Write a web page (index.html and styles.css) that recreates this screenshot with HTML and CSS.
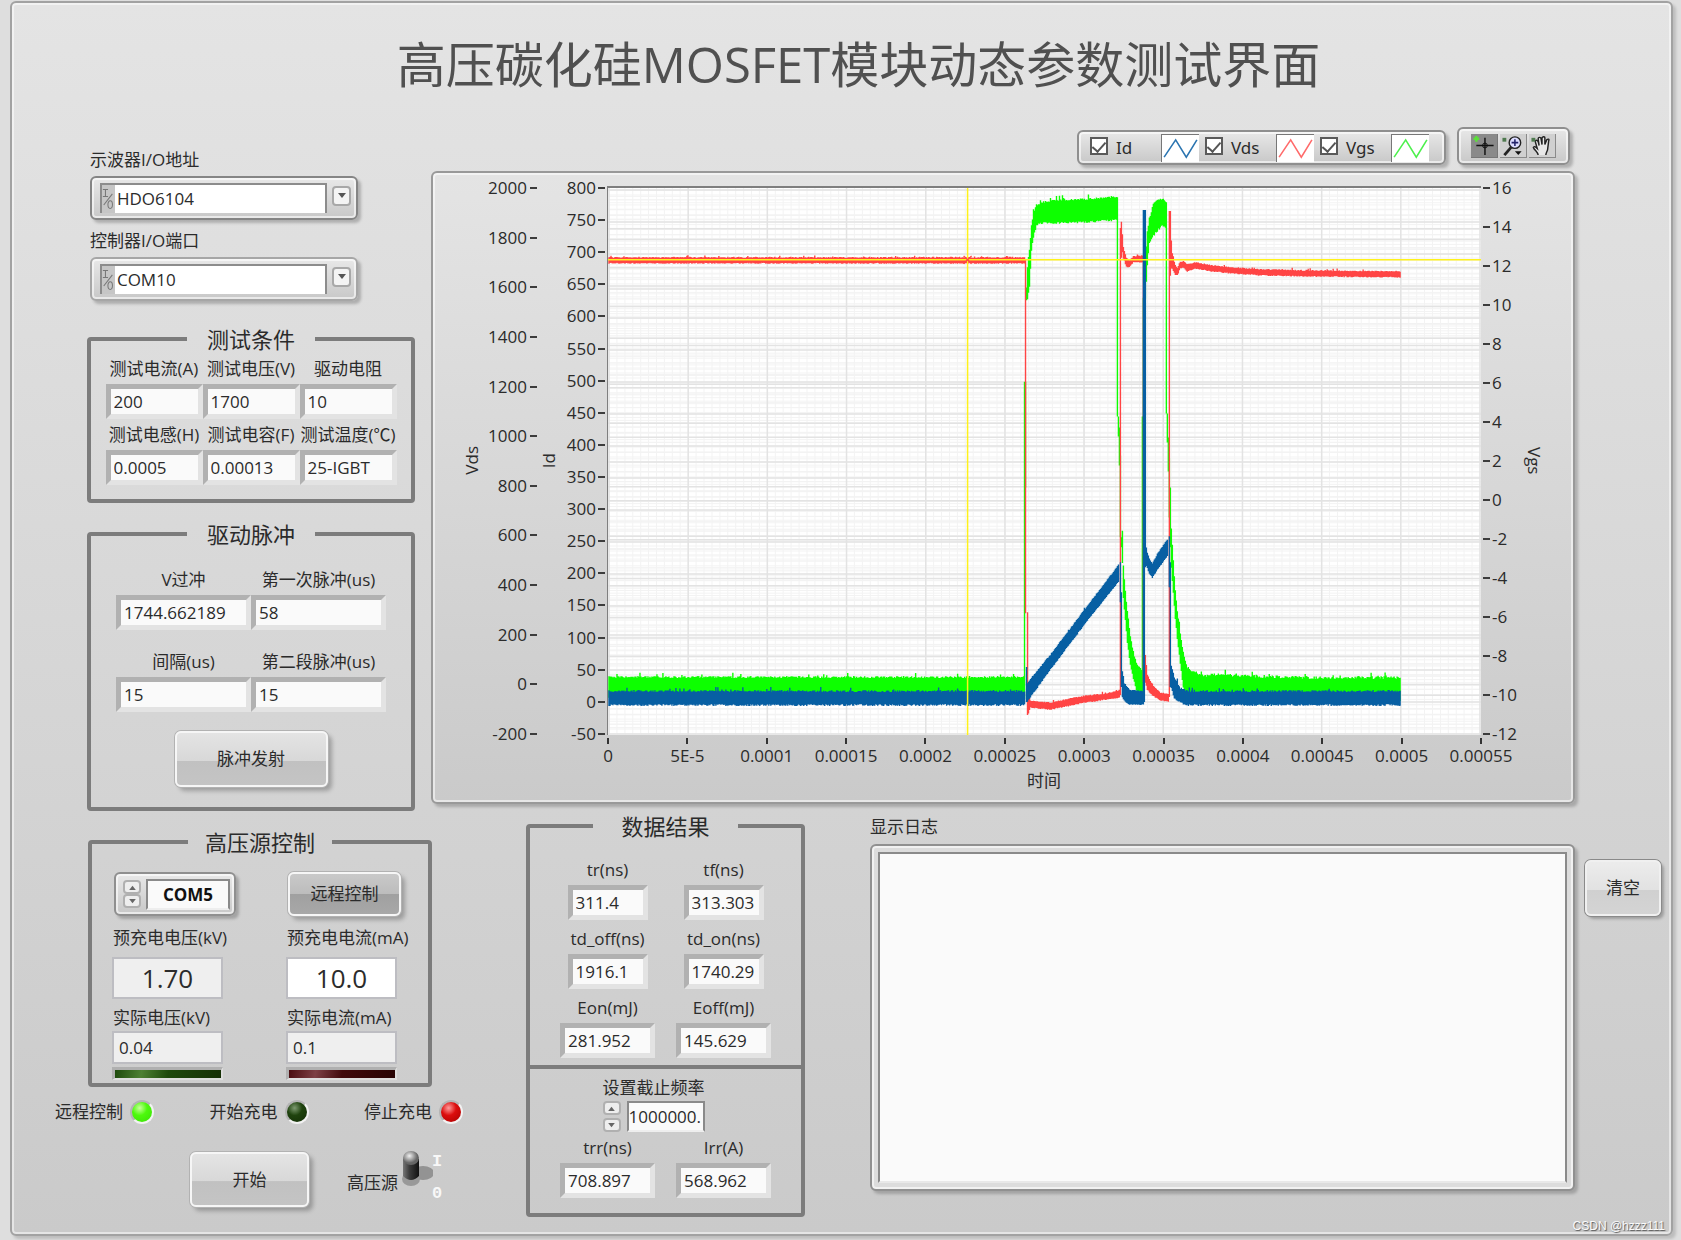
FILE: index.html
```html
<!DOCTYPE html>
<html lang="zh-CN">
<head>
<meta charset="utf-8">
<title>高压碳化硅MOSFET模块动态参数测试界面</title>
<link rel="stylesheet" href="styles.css">
</head>
<body>
<main class="panel">
  <h1 class="title">高压碳化硅MOSFET模块动态参数测试界面</h1>

  <div class="upper">
    <div class="setup">
      <label class="label" for="scope">示波器I/O地址</label>
      <div class="combo combo-focus">
        <svg class="io" viewBox="0 0 15 30" aria-hidden="true"><path d="M1 4h6M1 12h6M4 4v8M2 22L12 9M9.500 17c-3.500 0-3.500 9 0 9s3.500-9 0-9" /></svg>
        <select class="combo-select" id="scope"><option>HDO6104</option></select>
        <span class="drop"><svg viewBox="0 0 10 6" width="10" height="6" aria-hidden="true"><path d="M1 0h8L5 5z"/></svg></span>
      </div>
      <label class="label label-second" for="port">控制器I/O端口</label>
      <div class="combo">
        <svg class="io" viewBox="0 0 15 30" aria-hidden="true"><path d="M1 4h6M1 12h6M4 4v8M2 22L12 9M9.500 17c-3.500 0-3.500 9 0 9s3.500-9 0-9" /></svg>
        <select class="combo-select" id="port"><option>COM10</option></select>
        <span class="drop"><svg viewBox="0 0 10 6" width="10" height="6" aria-hidden="true"><path d="M1 0h8L5 5z"/></svg></span>
      </div>

      <fieldset class="group conditions">
        <legend>测试条件</legend>
        <div class="condition-grid">
          <div class="field"><label for="c1">测试电流(A)</label><input id="c1" value="200"></div>
          <div class="field"><label for="c2">测试电压(V)</label><input id="c2" value="1700"></div>
          <div class="field"><label for="c3">驱动电阻</label><input id="c3" value="10"></div>
          <div class="field"><label for="c4">测试电感(H)</label><input id="c4" value="0.0005"></div>
          <div class="field"><label for="c5">测试电容(F)</label><input id="c5" value="0.00013"></div>
          <div class="field"><label for="c6">测试温度(℃)</label><input id="c6" value="25-IGBT"></div>
        </div>
      </fieldset>

      <fieldset class="group pulses">
        <legend>驱动脉冲</legend>
        <div class="pulse-grid">
          <div class="field"><label for="p1">V过冲</label><input id="p1" value="1744.662189"></div>
          <div class="field"><label for="p2">第一次脉冲(us)</label><input id="p2" value="58"></div>
          <div class="field"><label for="p3">间隔(us)</label><input id="p3" value="15"></div>
          <div class="field"><label for="p4">第二段脉冲(us)</label><input id="p4" value="15"></div>
        </div>
        <button class="btn btn-pulse" type="button">脉冲发射</button>
      </fieldset>
    </div>

    <section class="scope">
      <div class="bars">
        <div class="bar legend-bar">
          <label class="series"><input type="checkbox" checked><span>Id</span><svg viewBox="0 0 38 28" aria-hidden="true"><path class="id" d="M2 23L14 5L25 23L36 5"/></svg></label>
          <label class="series"><input type="checkbox" checked><span>Vds</span><svg viewBox="0 0 38 28" aria-hidden="true"><path class="vds" d="M2 23L14 5L25 23L36 5"/></svg></label>
          <label class="series"><input type="checkbox" checked><span>Vgs</span><svg viewBox="0 0 38 28" aria-hidden="true"><path class="vgs" d="M2 23L14 5L25 23L36 5"/></svg></label>
        </div>
        <div class="bar tool-bar">
          <button class="tool tool-on" type="button" aria-label="光标"><svg viewBox="0 0 26 24"><path d="M14 4v18M5 12h18" stroke="#111" stroke-width="1.500"/><circle cx="14" cy="12" r="2.500" fill="none" stroke="#111"/><path d="M5 2v6M2 5h6" stroke="#5be03a" stroke-width="2.500"/></svg></button>
          <button class="tool" type="button" aria-label="缩放"><svg viewBox="0 0 26 24"><path d="M4 22l7-8" stroke="#222" stroke-width="3"/><circle cx="15" cy="9" r="6" fill="#dcdcff" stroke="#222" stroke-width="1.500"/><path d="M15 5.500v7M11.500 9h7" stroke="#22226a" stroke-width="1.600"/><path d="M15 18h7l-3.500 4z" fill="#111"/><path d="M2 4h4v4H2z" fill="#4f7a4f"/></svg></button>
          <button class="tool" type="button" aria-label="平移"><svg viewBox="0 0 26 24"><path d="M9 22c0-3-4-5-5-8 1-2 3 0 4 1L6 8c0-2 2-2 3 0l1 4-1-7c0-2 3-2 3 0l1 6V4c1-2 3-1 3 0v7l2-5c1-1 3-1 2 1l-1 8c0 3-2 4-2 7" fill="#e8e8e8" stroke="#222" stroke-width="1.500"/><path d="M2 4h4v4H2z" fill="#4f7a4f"/></svg></button>
        </div>
      </div>

      <div class="chart">
        <div class="axis-name name-left">Vds</div>
        <ol class="ticks ticks-left"><li>2000</li><li>1800</li><li>1600</li><li>1400</li><li>1200</li><li>1000</li><li>800</li><li>600</li><li>400</li><li>200</li><li>0</li><li>-200</li></ol>
        <div class="axis-name name-left">Id</div>
        <ol class="ticks ticks-left ticks-near"><li>800</li><li>750</li><li>700</li><li>650</li><li>600</li><li>550</li><li>500</li><li>450</li><li>400</li><li>350</li><li>300</li><li>250</li><li>200</li><li>150</li><li>100</li><li>50</li><li>0</li><li>-50</li></ol>
        <svg class="plot" id="plot" viewBox="0 0 874 548" preserveAspectRatio="none" role="img" aria-label="Id Vds Vgs"></svg>
        <ol class="ticks ticks-right"><li>16</li><li>14</li><li>12</li><li>10</li><li>8</li><li>6</li><li>4</li><li>2</li><li>0</li><li>-2</li><li>-4</li><li>-6</li><li>-8</li><li>-10</li><li>-12</li></ol>
        <div class="axis-name name-right">Vgs</div>
        <ol class="ticks-x"><li>0</li><li>5E-5</li><li>0.0001</li><li>0.00015</li><li>0.0002</li><li>0.00025</li><li>0.0003</li><li>0.00035</li><li>0.0004</li><li>0.00045</li><li>0.0005</li><li>0.00055</li></ol>
        <div class="time">时间</div>
      </div>
    </section>
  </div>

  <div class="lower">
    <section class="source">
      <fieldset class="group hv">
        <legend>高压源控制</legend>
        <div class="hv-grid">
          <div class="com">
            <span class="spin"><button type="button" aria-label="增加"><svg viewBox="0 0 10 6"><path d="M1 6h8L5 1z"/></svg></button><button type="button" aria-label="减少"><svg viewBox="0 0 10 6"><path d="M1 0h8L5 5z"/></svg></button></span>
            <input class="com-input" value="COM5" aria-label="COM">
          </div>
          <button class="btn btn-remote" type="button">远程控制</button>
          <div class="reading">
            <label class="label" for="h1">预充电电压(kV)</label>
            <input class="big muted" id="h1" value="1.70">
            <label class="label" for="h3">实际电压(kV)</label>
            <input class="small" id="h3" value="0.04">
            <span class="strip strip-green"></span>
          </div>
          <div class="reading">
            <label class="label" for="h2">预充电电流(mA)</label>
            <input class="big" id="h2" value="10.0">
            <label class="label" for="h4">实际电流(mA)</label>
            <input class="small" id="h4" value="0.1">
            <span class="strip strip-red"></span>
          </div>
        </div>
      </fieldset>
      <div class="leds">
        <span class="status">远程控制<i class="led led-on"></i></span>
        <span class="status">开始充电<i class="led led-off"></i></span>
        <span class="status">停止充电<i class="led led-red"></i></span>
      </div>
      <div class="actions">
        <button class="btn btn-start" type="button">开始</button>
        <label class="power"><input type="checkbox" checked><span class="power-name">高压源</span>
          <svg class="lever" viewBox="0 0 32 38" aria-hidden="true">
            <defs><linearGradient id="rod"><stop offset="0" stop-color="#777"/><stop offset=".4" stop-color="#3c3c3c"/><stop offset="1" stop-color="#111"/></linearGradient><radialGradient id="knob" cx=".4" cy=".35"><stop offset="0" stop-color="#f0f0f0"/><stop offset="1" stop-color="#666"/></radialGradient></defs>
            <ellipse cx="22" cy="23" rx="11" ry="7" fill="#939393"/><ellipse cx="10" cy="29" rx="9" ry="7" fill="#999"/><path d="M2 9v17q8 8 16 0V9z" fill="url(#rod)"/><ellipse cx="10" cy="8" rx="8" ry="7" fill="url(#knob)"/>
          </svg>
          <span class="marks"><span>I</span><span>0</span></span>
        </label>
      </div>
    </section>

    <fieldset class="group results">
      <legend>数据结果</legend>
      <div class="result-grid">
        <div class="field narrow"><label for="r1">tr(ns)</label><input id="r1" value="311.4"></div>
        <div class="field narrow"><label for="r2">tf(ns)</label><input id="r2" value="313.303"></div>
        <div class="field narrow"><label for="r3">td_off(ns)</label><input id="r3" value="1916.1"></div>
        <div class="field narrow"><label for="r4">td_on(ns)</label><input id="r4" value="1740.29"></div>
        <div class="field wide"><label for="r5">Eon(mJ)</label><input id="r5" value="281.952"></div>
        <div class="field wide"><label for="r6">Eoff(mJ)</label><input id="r6" value="145.629"></div>
      </div>
      <div class="cutoff">
        <label class="label" for="cut">设置截止频率</label>
        <div class="cutoff-row">
          <span class="spin spin-split"><button type="button" aria-label="增加"><svg viewBox="0 0 10 6"><path d="M1 6h8L5 1z"/></svg></button><button type="button" aria-label="减少"><svg viewBox="0 0 10 6"><path d="M1 0h8L5 5z"/></svg></button></span>
          <input class="cut-input" id="cut" value="1000000.">
        </div>
      </div>
      <div class="result-grid recovery">
        <div class="field wide"><label for="r7">trr(ns)</label><input id="r7" value="708.897"></div>
        <div class="field wide"><label for="r8">Irr(A)</label><input id="r8" value="568.962"></div>
      </div>
    </fieldset>

    <section class="log">
      <label class="label" for="log">显示日志</label>
      <div class="log-frame"><textarea id="log"></textarea></div>
    </section>
    <button class="btn btn-clear" type="button">清空</button>
  </div>
  <span class="credit">CSDN @hzzz111</span>
</main>
<script src="chart.js"></script>
</body>
</html>
```
FILE: styles.css
```css
* { box-sizing: border-box; }

body {
  margin: 0;
  background: #dedede;
  color: #2b2b2b;
  font: 17px/24px "Open Sans", "Noto Sans CJK SC", sans-serif;
}

input, select, button, textarea { font: inherit; color: inherit; }
button { padding: 0; }
ol { list-style: none; margin: 0; padding: 0; }

.panel {
  position: relative;
  margin: 1px 8px 5px 10px;
  padding-bottom: 17px;
  border: 2px solid #a2a2a2;
  border-radius: 6px;
  background: linear-gradient(#e4e4e4, #cacaca);
  box-shadow: inset 0 0 0 2px rgba(255, 255, 255, .5), 3px 3px 3px rgba(0, 0, 0, .15);
}

.title {
  margin: 0;
  padding: 28px 0 30px 34px;
  text-align: center;
  font-size: 49px;
  line-height: 66px;
  font-weight: 400;
  color: #505050;
}

.label { display: block; line-height: 24px; white-space: nowrap; }

/* upper half: settings and the oscilloscope */
.upper {
  display: grid;
  grid-template-columns: 328px minmax(0, 1fr);
  gap: 16px;
  padding: 0 96px 0 75px;
}
.setup { padding-top: 21px; }
.setup > .label { margin-left: 3px; }
.setup > .label-second { margin-top: 9px; }

.combo, .com, .bar {
  display: flex;
  align-items: center;
  border: 2px solid #a6a6a6;
  border-radius: 6px;
  background: linear-gradient(#e8e8e8, #c8c8c8);
  box-shadow: inset 0 0 0 2px rgba(255, 255, 255, .6), 3px 3px 3px rgba(0, 0, 0, .22);
}
.combo { width: 268px; height: 44px; margin: 4px 0 0 3px; padding: 0 5px 0 8px; }
.combo-focus { border-color: #858585; }
.io { width: 15px; height: 30px; background: #c6c6c6; border: solid #8c8c8c; border-width: 2px 0 0 2px; fill: none; stroke: #777; stroke-width: 1.2; }
.combo-select {
  appearance: none;
  width: 213px;
  height: 30px;
  padding: 0 2px;
  border: 0;
  border-top: 2px solid #8c8c8c;
  border-right: 2px solid #8c8c8c;
  border-radius: 0;
  background: #fff;
  line-height: 26px;
}
.drop {
  display: flex;
  align-items: center;
  justify-content: center;
  width: 19px;
  height: 20px;
  margin: 0 0 4px 5px;
  border: 2px solid #a8a8a8;
  border-radius: 4px;
  background: #f4f4f4;
  fill: #555;
}

.group {
  min-width: 0;
  margin: 0;
  padding: 0;
  border: 4px solid #7c7c7c;
  border-radius: 4px;
}
.group legend { margin: 0 auto; padding: 0 20px; font-size: 22px; line-height: 28px; height: 28px; }
.conditions { margin-top: 24px; padding: 4px 0 14px; }
.condition-grid { display: grid; grid-template-columns: repeat(3, 97px); gap: 4px 0; justify-content: center; }
.pulses { margin-top: 17px; padding: 20px 0 20px; }
.pulse-grid { display: grid; grid-template-columns: repeat(2, 135px); gap: 20px 0; justify-content: center; }

.field { display: flex; flex-direction: column; align-items: center; gap: 3px; }
.field label { line-height: 24px; white-space: nowrap; }
.field input {
  width: 100%;
  height: 35px;
  padding: 0 3px;
  border: 5px solid;
  border-color: #b1b1b1 #e3e3e3 #e3e3e3 #b1b1b1;
  border-radius: 0;
  background: #fafafa;
}

.btn {
  border: 2px solid #f6f6f6;
  border-radius: 6px;
  background: linear-gradient(#e4e4e4, #d8d8d8 53%, #c1c1c1 54%, #c4c4c4);
  box-shadow: 0 0 0 1px #b2b2b2, 4px 4px 4px rgba(0, 0, 0, .25);
}
.btn-pulse { display: block; width: 153px; height: 56px; margin: 19px auto 0; }

/* bars above the chart */
.bars { display: flex; justify-content: flex-end; align-items: flex-end; gap: 11px; height: 38px; padding-right: 5px; }
.bar { border-color: #8f8f8f; }
.legend-bar { width: 369px; height: 35px; padding-left: 11px; }
.tool-bar { width: 113px; height: 38px; padding-left: 12px; gap: 2px; }
.series { display: flex; align-items: center; width: 115px; font-family: "Noto Sans", sans-serif; }
.series input {
  appearance: none;
  display: grid;
  place-items: center;
  width: 18px;
  height: 18px;
  margin: 0 8px 3px 0;
  border: 2px solid #5a5a5a;
  background: #fff;
}
.series input:checked::before {
  content: "";
  width: 6px;
  height: 11px;
  margin-bottom: 3px;
  border: solid #555;
  border-width: 0 2px 2px 0;
  transform: rotate(42deg);
}
.series span { flex: 1; }
.series svg { width: 38px; height: 28px; margin-right: 6px; border: solid #777; border-width: 1px 0 0 1px; background: #fff; fill: none; stroke-width: 1.6; }
.id { stroke: #2a74b0; }
.vds { stroke: #ff6a6a; }
.vgs { stroke: #4cf04c; }
.tool { width: 27px; height: 24px; border: solid #8a8a8a; border-width: 0 1px 1px 0; background: #d0d0d0; }
.tool svg { display: block; width: 26px; height: 23px; fill: none; }
.tool-on { background: #8a8a8a; border-color: #777; }

/* chart */
.chart {
  display: grid;
  grid-template-columns: 22px 54px 24px 46px minmax(0, 1fr) 42px 22px;
  grid-template-rows: 549px 34px 24px;
  margin-top: 6px;
  padding: 13px 28px 9px;
  border: 2px solid #999;
  border-radius: 6px;
  background: linear-gradient(#e4e4e4, #cacaca);
  box-shadow: inset 0 0 0 2px rgba(255, 255, 255, .55), 3px 3px 3px rgba(0, 0, 0, .2);
}
.axis-name { writing-mode: vertical-rl; justify-self: center; align-self: center; line-height: 22px; }
.name-left { transform: rotate(180deg); }
.ticks { display: flex; flex-direction: column; justify-content: space-between; padding: 2px 0 1px; }
.ticks li { display: flex; align-items: center; height: 0; line-height: 24px; }
.ticks-left li { justify-content: flex-end; gap: 3px; }
.ticks-left li::after, .ticks-right li::before { content: ""; width: 7px; height: 2px; background: #3c3c3c; }
.ticks-near { padding-right: 2px; }
.ticks-near li { gap: 2px; }
.ticks-right { padding-left: 2px; }
.ticks-right li { gap: 2px; }
.plot { width: 100%; height: 549px; border: solid #7f7f7f; border-width: 2px 0 0 1px; background: #fff; }
.ticks-x { grid-column: 5; display: flex; justify-content: space-between; padding: 3px 0 0 1px; }
.ticks-x li { display: flex; flex-direction: column; align-items: center; width: 0; white-space: nowrap; }
.ticks-x li::before { content: ""; width: 2px; height: 6px; background: #333; }
.time { grid-column: 5; justify-self: center; }

.plot path { fill: none; }
.grid-minor { stroke: #f3f3f3; }
.grid-major { stroke: #e3e3e3; stroke-width: 1.5; }
.trace-vgs { stroke: #0dff00; stroke-width: 1.4; }
.trace-vds { stroke: #ff4444; stroke-width: 1.4; }
.trace-id { stroke: #075fa3; stroke-width: 1.4; }
.cursor { stroke: #fff21a; stroke-width: 1.5; }

/* lower half */
.lower {
  display: grid;
  grid-template-columns: 408px 279px minmax(0, 1fr) 76px;
  align-items: start;
  padding: 1px 10px 0 43px;
}
.source { padding-top: 16px; }
.hv { width: 344px; margin-left: 33px; padding: 16px 0 3px; }
.hv legend { padding: 0 17px; }
.hv-grid { display: grid; grid-template-columns: 174px 1fr; margin-left: 20px; }
.com { width: 122px; height: 44px; margin-left: 2px; padding-left: 7px; gap: 5px; border-color: #8f8f8f; }
.spin { display: flex; flex-direction: column; width: 18px; }
.spin button {
  display: grid;
  place-items: center;
  width: 18px;
  height: 14px;
  border: 2px solid #b0b0b0;
  border-radius: 4px;
  background: #eee;
}
.spin svg { width: 9px; height: 5px; fill: #666; }
.spin-split { gap: 3px; }
.com-input { width: 84px; height: 31px; padding: 0; border: 2px solid; border-color: #8a8a8a #8a8a8a #eee #8a8a8a; background: #fafafa; text-align: center; font-weight: 700; color: #111; }
.btn-remote { width: 113px; height: 44px; margin-left: 2px; background: linear-gradient(#c9c9c9, #bcbcbc 50%, #a0a0a0 51%, #a8a8a8); }
.reading { display: flex; flex-direction: column; padding-top: 10px; }
.reading .label { padding-left: 1px; }
.big, .small { width: 111px; border: 2px solid #bdbdc2; border-radius: 0; background: #fff; }
.big { height: 42px; margin: 7px 0; padding: 0; text-align: center; font-size: 26px; }
.small { height: 33px; margin-top: 1px; padding: 0 5px; background: #efefef; }
.muted { background: #efefef; }
.strip { width: 111px; height: 13px; margin-top: 3px; border: solid; border-width: 3px 2px 2px 3px; border-color: #b0b0b0 #ddd #ddd #b0b0b0; }
.strip-green { background: linear-gradient(100deg, #1e4a0c, #4d8033 25%, #1e4a0c 50%, #163006); }
.strip-red { background: linear-gradient(100deg, #4a0c10, #7d4045 25%, #420a0c 50%, #280303); }

.leds { display: flex; justify-content: space-between; margin-top: 11px; height: 28px; }
.status { display: flex; align-items: center; gap: 7px; white-space: nowrap; }
.led { width: 24px; height: 24px; border: 2px solid #b4b4b4; border-right-color: #f2f2f2; border-bottom-color: #f2f2f2; border-radius: 50%; }
.led-on { background: radial-gradient(circle at 38% 30%, #c8ff9c, #4dfa0c 40%, #3adf08); }
.led-off { background: radial-gradient(circle at 38% 30%, #7d9a70, #1f430e 40%, #132c06); }
.led-red { background: radial-gradient(circle at 38% 30%, #ff9c9c, #dc0d0d 40%, #a80000); }

.actions { display: flex; margin: 24px 0 0 135px; }
.btn-start { width: 119px; height: 55px; margin-top: 2px; }
.power { display: flex; margin-left: 38px; }
.power input { position: absolute; opacity: 0; }
.power-name { margin: 21px 3px 0 0; }
.lever { width: 32px; height: 38px; }
.marks { display: flex; flex-direction: column; gap: 8px; margin-left: -1px; font-family: "Liberation Mono", monospace; font-weight: 700; color: #f8f8f8; }

.results { margin-left: 63px; margin-right: -63px; padding: 18px 0 15px; }
.results legend { padding: 0 28px; }
.result-grid { display: grid; grid-template-columns: repeat(2, 116px); gap: 7px 0; justify-content: center; }
.narrow input { width: 80px; }
.wide input { width: 95px; }
.cutoff { display: flex; flex-direction: column; align-items: center; margin-top: 7px; padding: 7px 24px 3px 0; border-top: 4px solid #7c7c7c; }
.cutoff-row { display: flex; align-items: center; gap: 6px; height: 33px; }
.cut-input { width: 78px; height: 31px; padding: 0; border: 2px solid; border-color: #8a8a8a #8a8a8a #eee #8a8a8a; background: #fafafa; }

.log { margin: 3px 10px 0 128px; }
.log-frame {
  height: 347px;
  margin-top: 5px;
  padding: 6px;
  border: 2px solid #909090;
  border-radius: 6px;
  background: #dcdcdc;
  box-shadow: inset 0 0 0 2px rgba(255, 255, 255, .6), 3px 3px 3px rgba(0, 0, 0, .2);
}
.log-frame textarea { display: block; width: 100%; height: 100%; border: 2px solid; border-color: #8a8a8a #8a8a8a #e8e8e8 #8a8a8a; background: #fafafa; resize: none; }
.btn-clear { width: 76px; height: 56px; margin-top: 48px; border-color: #f0f0f0; background: linear-gradient(#ececec, #e2e2e2 53%, #d0d0d0 54%, #d4d4d4); box-shadow: 0 0 0 1px #8a8a8a, 3px 3px 3px rgba(0, 0, 0, .25); }

.credit { position: absolute; right: 6px; bottom: -1px; font: 12px/18px "Liberation Sans", Arial, sans-serif; color: #fafafa; text-shadow: 1px 1px 1px #555; }
```
FILE: chart.js
```js
// Draws the grid, the three recorded waveforms and the yellow cursor.
const plot = document.getElementById('plot');
const NS = 'http://www.w3.org/2000/svg';

function add(className, d) {
  const path = document.createElementNS(NS, 'path');
  path.setAttribute('class', className);
  path.setAttribute('d', d);
  plot.appendChild(path);
}

let seed = 7;
function noise() {
  seed = (seed * 16807) % 2147483647;
  return seed / 2147483647;
}

function rows(count) {
  let d = '';
  for (let i = 0; i <= count; i++) d += `M0 ${(2 + 545 * i / count).toFixed(1)}H874`;
  return d;
}
function columns(count) {
  let d = '';
  for (let i = 0; i <= count; i++) d += `M${(1 + 872 * i / count).toFixed(1)} 0V548`;
  return d;
}

// Keyframes are [x, top, bottom]; every pixel column gets one noisy stroke.
function band(keys, jitter) {
  let d = '';
  for (let k = 0; k < keys.length - 1; k++) {
    const [x0, a0, b0] = keys[k];
    const [x1, a1, b1] = keys[k + 1];
    for (let x = x0; x < x1; x++) {
      const t = (x - x0) / (x1 - x0);
      const spike = noise() > 0.92 ? jitter * noise() * 2 : 0;
      const top = a0 + (a1 - a0) * t - noise() * jitter - spike;
      const bottom = b0 + (b1 - b0) * t + noise() * jitter;
      d += `M${x} ${top.toFixed(1)}V${bottom.toFixed(1)}`;
    }
  }
  return d;
}

add('grid-minor', rows(110) + rows(85) + rows(56) + columns(110));
add('grid-major', rows(11) + rows(17) + rows(14) + columns(11));

add('trace-vgs',
  band([[1, 491, 510], [418, 491, 510]], 2) +
  'M417 505V194M418 300V194' +
  band([[419, 100, 112], [420, 80, 110], [422, 62, 98], [424, 38, 62], [426, 26, 48], [429, 18, 36], [436, 15, 34], [450, 13, 34], [480, 12, 33], [511, 10, 31]], 2) +
  'M510 12V229M511 229V249M512 240V278M513 268V350M514 350V360' +
  band([[515, 345, 375], [516, 380, 410], [518, 405, 432], [520, 425, 455], [523, 450, 476], [526, 466, 490], [529, 477, 502], [535, 485, 510]], 2) +
  'M535 505V229M536 240V110' +
  band([[538, 75, 108], [540, 46, 75], [542, 32, 54], [546, 18, 46], [551, 14, 40], [555, 13, 36], [560, 18, 42]], 3) +
  'M559 20V226M560 226V255M561 250V284M562 270V330M563 300V360' +
  band([[563, 320, 350], [564, 342, 380], [566, 375, 404], [568, 405, 430], [570, 424, 450], [573, 448, 476], [576, 468, 500], [580, 482, 508], [590, 488, 514], [600, 490, 517]], 2) +
  band([[600, 489, 512], [660, 491, 515], [700, 492, 511], [794, 492, 511]], 3));

add('trace-vds',
  band([[1, 70, 75], [418, 70, 75]], 1) +
  'M418 72V426M420 425V528' +
  band([[421, 508, 526], [423, 514, 520], [443, 516, 522], [458, 513, 519], [478, 509, 515], [498, 507, 512], [513, 504, 510]], 1) +
  'M513 508V40M514 34V70' +
  band([[514, 34, 58], [516, 60, 70], [519, 70, 78], [522, 73, 79], [526, 69, 74], [536, 68, 74]], 1) +
  'M536 70V495' +
  band([[538, 469, 495], [540, 488, 502], [545, 498, 508], [553, 506, 513], [562, 507, 514]], 1) +
  'M562 510V23M563 23V88' +
  band([[563, 40, 80], [565, 66, 80], [568, 78, 87], [570, 81, 87], [573, 74, 80], [576, 74, 79], [580, 77, 83], [588, 75, 80], [604, 78, 83], [624, 80, 85], [654, 82, 87], [700, 83, 88], [794, 84, 89]], 1));

add('trace-id',
  band([[1, 505, 517], [418, 505, 517]], 2) +
  'M419 480V515' +
  band([[420, 497, 514], [424, 491, 508], [443, 468, 482], [480, 419, 433], [512, 377, 393]], 1) +
  'M513 375V415M514 405V500' +
  band([[515, 485, 510], [517, 497, 513], [522, 503, 517], [537, 505, 517]], 1) +
  'M536 22V515M537 22V515M538 22V380' +
  band([[539, 362, 378], [542, 372, 386], [545, 377, 390], [550, 367, 382], [561, 351, 367]], 1) +
  'M562 349V400M563 375V500' +
  band([[564, 480, 500], [567, 491, 510], [573, 502, 515], [580, 505, 517], [794, 505, 517]], 2));

add('cursor', 'M0 72H874M360 0V548');
add('trace-vds', 'M356 68L364 76M364 68L356 76');
```
